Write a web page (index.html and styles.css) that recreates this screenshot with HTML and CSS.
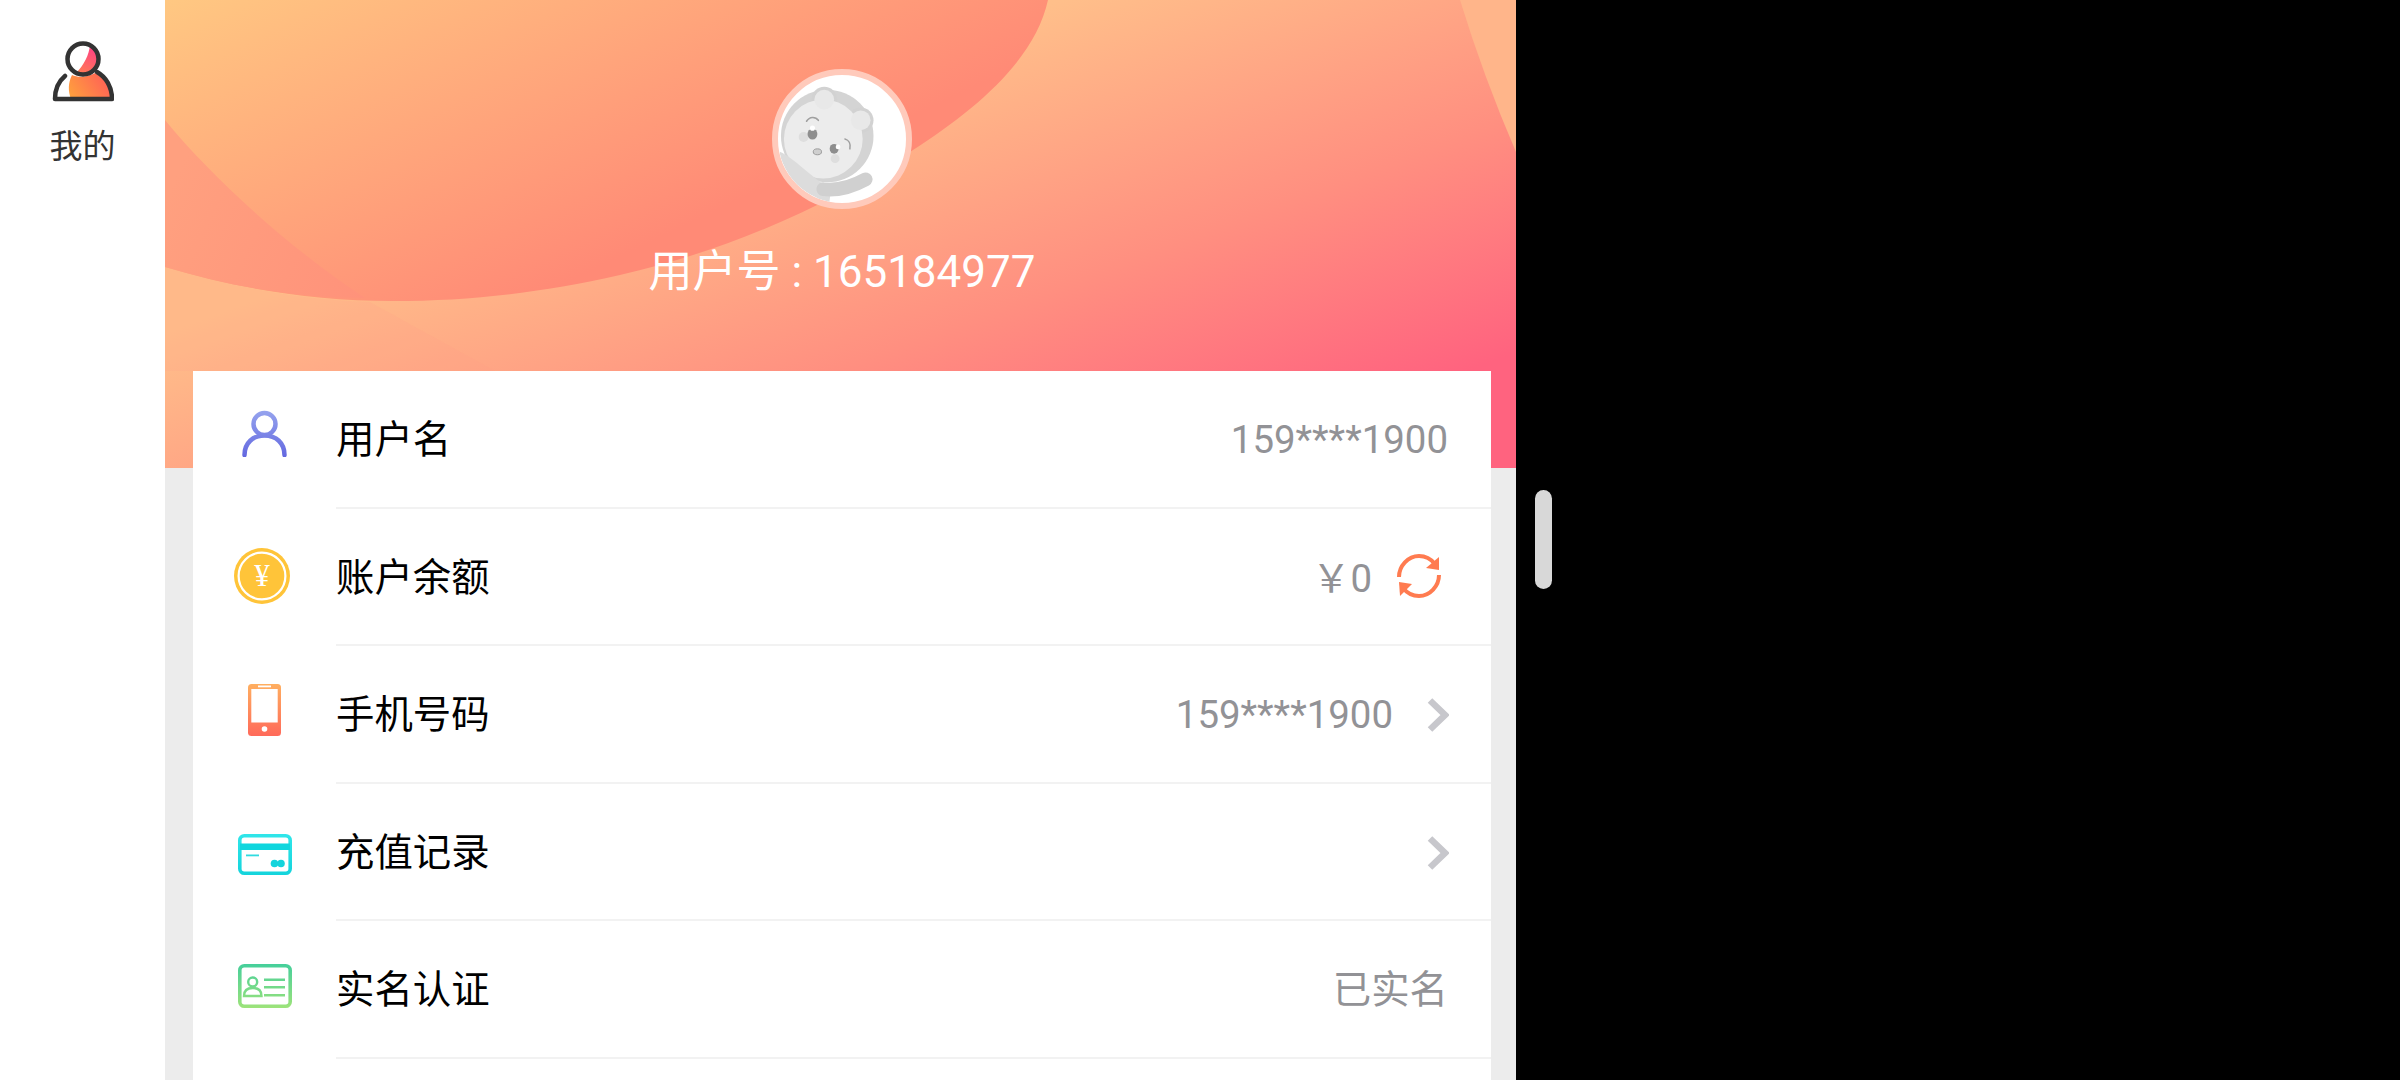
FILE: index.html

```html
<!DOCTYPE html>
<html lang="zh-CN">
<head>
    <meta charset="UTF-8">
    <title>我的</title>
    <link rel="stylesheet" href="styles.css">
</head>
<body>

<div class="screen">

    <div class="sidebar">
        <svg class="tab-icon" width="62" height="62" viewBox="0 0 62 62">
            <defs>
                <linearGradient id="tabBody" x1="0" y1="1" x2="1" y2="0.6">
                    <stop offset="0" stop-color="#ffa43c"/>
                    <stop offset="1" stop-color="#ff6455"/>
                </linearGradient>
                <linearGradient id="tabHead" x1="0.7" y1="0" x2="0.3" y2="1">
                    <stop offset="0" stop-color="#ff3f86"/>
                    <stop offset="1" stop-color="#ff7a55"/>
                </linearGradient>
            </defs>
            <path d="M19 58 C16 50 16 42 20 34 C26 37 37 36 43 32 C53 37 59 47 59 58 Z" fill="url(#tabBody)"/>
            <path d="M38 4 C37 14 32 24 24 32 A15 15 0 0 0 38 4 Z" fill="url(#tabHead)"/>
            <circle cx="31" cy="18" r="15.5" fill="none" stroke="#333" stroke-width="4.5"/>
            <path d="M13 35 C7 40 3 48 3 58 H60 C60 46 54 36 45 31" fill="none" stroke="#333" stroke-width="4.5" stroke-linecap="round" stroke-linejoin="round"/>
        </svg>
        <div class="tab-label">我的</div>
    </div>

    <div class="main">
        <div class="hero">
            <svg class="hero-bg" width="1351" height="468" viewBox="165 0 1351 468">
                <defs>
                    <linearGradient id="heroBase" gradientUnits="userSpaceOnUse" x1="1060" y1="0" x2="1231" y2="459">
                        <stop offset="0" stop-color="#ffbf8a"/>
                        <stop offset="0.55" stop-color="#ff8f80"/>
                        <stop offset="1" stop-color="#ff637f"/>
                    </linearGradient>
                    <linearGradient id="heroArc" gradientUnits="userSpaceOnUse" x1="165" y1="0" x2="350" y2="386">
                        <stop offset="0" stop-color="#ffc882"/>
                        <stop offset="1" stop-color="#ff8a76"/>
                    </linearGradient>
                    <linearGradient id="heroWedge" gradientUnits="userSpaceOnUse" x1="165" y1="200" x2="380" y2="300">
                        <stop offset="0" stop-color="#ffa07f"/>
                        <stop offset="1" stop-color="#ff917a"/>
                    </linearGradient>
                </defs>
                <rect x="165" y="0" width="1351" height="468" fill="url(#heroBase)"/>
                <path d="M1460 0 Q1484 78 1516 152 V0 Z" fill="#ffb58a"/>
                <path d="M165 371 V267 C235 288 310 301 370 302 L495 371 Z" fill="#ff9d8a" opacity="0.16"/>
                <path d="M165 0 H1048 C1035 60 975 110 913 150 C830 205 730 250 620 275 C540 293 470 301 393 301 C310 301 235 288 165 267 Z" fill="url(#heroArc)"/>
                <path d="M165 120 C210 175 285 245 365 298 C300 298 235 288 165 267 Z" fill="url(#heroWedge)"/>
            </svg>

            <div class="avatar">
                <svg width="128" height="128" viewBox="6 6 130 130">
                    <defs>
                        <clipPath id="avatarClip"><circle cx="71" cy="71" r="65"/></clipPath>
                    </defs>
                    <g clip-path="url(#avatarClip)">
                        <circle cx="56" cy="68" r="47" fill="#d4d4d4"/>
                        <circle cx="53" cy="31" r="13" fill="#d2d2d2"/>
                        <circle cx="90" cy="52" r="13" fill="#d2d2d2"/>
                        <circle cx="52" cy="71" r="40" fill="#ececec"/>
                        <circle cx="53" cy="31" r="10" fill="#e8e8e8"/>
                        <circle cx="90" cy="52" r="10" fill="#e8e8e8"/>
                        <path d="M8 84 C22 90 42 112 60 122 L58 136 L6 136 Z" fill="#dcdcdc"/>
                        <path d="M52 122 C68 124 84 118 95 112" fill="none" stroke="#d0d0d0" stroke-width="14" stroke-linecap="round"/>
                        <path d="M35 53 C38 48 44 48 47 52" fill="none" stroke="#a0a0a0" stroke-width="1.6" stroke-linecap="round"/>
                        <path d="M74 71 C78 72 80 76 79 81" fill="none" stroke="#a0a0a0" stroke-width="1.6" stroke-linecap="round"/>
                        <circle cx="32" cy="69" r="5" fill="#dedede"/>
                        <circle cx="64" cy="91" r="4.5" fill="#dedede"/>
                        <ellipse cx="41" cy="66" rx="5" ry="5.5" fill="#8e8e8e"/>
                        <circle cx="41" cy="60" r="2.6" fill="#fff"/>
                        <ellipse cx="63" cy="81" rx="4.5" ry="5" fill="#8e8e8e"/>
                        <circle cx="67" cy="79" r="2.4" fill="#fff"/>
                        <ellipse cx="46" cy="84" rx="4.2" ry="3" fill="#cfcfcf" stroke="#9a9a9a" stroke-width="1"/>
                    </g>
                </svg>
            </div>
            <div class="user-no">用户号 : 165184977</div>
        </div>

        <div class="card">

            <div class="row">
                <div class="row-icon">
                    <svg class="nudge-user" width="45" height="47" viewBox="0 0 45 47">
                        <defs>
                            <linearGradient id="userGrad" gradientUnits="userSpaceOnUse" x1="0" y1="0" x2="0" y2="47">
                                <stop offset="0" stop-color="#96a4ee"/>
                                <stop offset="1" stop-color="#6368e0"/>
                            </linearGradient>
                        </defs>
                        <circle cx="22.5" cy="14" r="11" fill="none" stroke="url(#userGrad)" stroke-width="4.5"/>
                        <path d="M2.5 45 C2.5 33 11 25.5 22.5 25.5 C34 25.5 42.5 33 42.5 45" fill="none" stroke="url(#userGrad)" stroke-width="4.5" stroke-linecap="round"/>
                    </svg>
                </div>
                <div class="row-body">
                    <span class="row-label">用户名</span>
                    <span class="row-value">159****1900</span>
                </div>
            </div>

            <div class="row">
                <div class="row-icon">
                    <svg class="nudge-coin" width="56" height="56" viewBox="0 0 56 56">
                        <circle cx="28" cy="28" r="28" fill="#ffc439"/>
                        <circle cx="28" cy="28" r="23.4" fill="none" stroke="#fff" stroke-width="2.2"/>
                        <text class="coin-text" x="28" y="38" text-anchor="middle">¥</text>
                    </svg>
                </div>
                <div class="row-body">
                    <span class="row-label">账户余额</span>
                    <span class="row-value value-money">￥0</span>
                    <svg class="refresh" width="44" height="44" viewBox="0 0 44 44">
                        <path d="M2 23 C2 12 11 2 22 2 C29 2 34 5 38 10" fill="none" stroke="#ff7b50" stroke-width="4"/>
                        <path d="M29 14 L42 16 L42 3 Z" fill="#ff7b50"/>
                        <path d="M42 21 C42 32 33 42 22 42 C15 42 10 39 6 34" fill="none" stroke="#ff7b50" stroke-width="4"/>
                        <path d="M15 30 L2 28 L3 42 Z" fill="#ff7b50"/>
                    </svg>
                </div>
            </div>

            <div class="row">
                <div class="row-icon">
                    <svg class="nudge-phone" width="33" height="52" viewBox="0 0 33 52">
                        <defs>
                            <linearGradient id="phoneGrad" x1="0" y1="0" x2="0" y2="1">
                                <stop offset="0" stop-color="#ffaf60"/>
                                <stop offset="1" stop-color="#ff6a5a"/>
                            </linearGradient>
                        </defs>
                        <rect width="33" height="52" rx="3.5" fill="url(#phoneGrad)"/>
                        <rect x="3.3" y="5" width="26.4" height="33.5" fill="#fff"/>
                        <rect x="10" y="1.5" width="13" height="1.8" fill="#fff"/>
                        <circle cx="16.5" cy="45" r="2.8" fill="#fff"/>
                    </svg>
                </div>
                <div class="row-body">
                    <span class="row-label">手机号码</span>
                    <span class="row-value">159****1900</span>
                    <svg class="chevron" width="22" height="34" viewBox="0 0 22 34">
                        <path d="M3 2.5 L18 17 L3 31.5" fill="none" stroke="#c7c7cc" stroke-width="6.5"/>
                    </svg>
                </div>
            </div>

            <div class="row">
                <div class="row-icon">
                    <svg class="nudge-card" width="54" height="41" viewBox="0 0 54 41">
                        <defs>
                            <linearGradient id="cardGrad" gradientUnits="userSpaceOnUse" x1="0" y1="0" x2="0" y2="41">
                                <stop offset="0" stop-color="#30e6ea"/>
                                <stop offset="1" stop-color="#14d4dc"/>
                            </linearGradient>
                        </defs>
                        <rect x="1.8" y="1.8" width="50.4" height="37.4" rx="4.5" fill="none" stroke="url(#cardGrad)" stroke-width="3.6"/>
                        <rect x="2" y="9.5" width="50" height="6.5" fill="#0fd6de"/>
                        <rect x="8" y="20.5" width="13" height="1.8" fill="#30dbe0"/>
                        <circle cx="36.5" cy="29.5" r="3.8" fill="#14d4dc"/>
                        <circle cx="43" cy="29.5" r="3.8" fill="#14d4dc"/>
                    </svg>
                </div>
                <div class="row-body">
                    <span class="row-label">充值记录</span>
                    <svg class="chevron chevron-only" width="22" height="34" viewBox="0 0 22 34">
                        <path d="M3 2.5 L18 17 L3 31.5" fill="none" stroke="#c7c7cc" stroke-width="6.5"/>
                    </svg>
                </div>
            </div>

            <div class="row">
                <div class="row-icon">
                    <svg class="nudge-id" width="54" height="44" viewBox="0 0 54 44">
                        <defs>
                            <linearGradient id="idGrad" gradientUnits="userSpaceOnUse" x1="0" y1="0" x2="0" y2="44">
                                <stop offset="0" stop-color="#45cf9b"/>
                                <stop offset="1" stop-color="#9de37a"/>
                            </linearGradient>
                        </defs>
                        <rect x="1.8" y="1.8" width="50.4" height="40.4" rx="4.5" fill="none" stroke="url(#idGrad)" stroke-width="3.6"/>
                        <circle cx="14.7" cy="18" r="4.5" fill="none" stroke="url(#idGrad)" stroke-width="2.4"/>
                        <path d="M6 32 C6 26 10 24 14.7 24 C19.5 24 23.5 26 23.5 32 Z" fill="none" stroke="url(#idGrad)" stroke-width="2.4"/>
                        <path d="M26 15.7 H47 M26 23.3 H47 M26 31.3 H47" fill="none" stroke="url(#idGrad)" stroke-width="2.4"/>
                    </svg>
                </div>
                <div class="row-body">
                    <span class="row-label">实名认证</span>
                    <span class="row-value value-cn">已实名</span>
                </div>
            </div>

            <div class="row">
                <div class="row-icon"></div>
                <div class="row-body"></div>
            </div>

        </div> <!-- end card -->
    </div> <!-- end main -->

    <div class="side-black">
        <div class="scroll-pill"></div>
    </div>

</div> <!-- end screen -->

</body>
</html>
```

FILE: styles.css

```css
html,
body {
    margin: 0;
    height: 100%;
    overflow: hidden;
}

body {
    background-color: #000;
    font-family: Roboto, "Noto Sans CJK SC", sans-serif;
}

.screen {
    display: flex;
    width: 2400px;
    height: 1080px;
    overflow: hidden;
}

/* left tab */

.sidebar {
    width: 165px;
    flex-shrink: 0;
    display: flex;
    flex-direction: column;
    align-items: center;
    padding-top: 41px;
    box-sizing: border-box;
    background-color: #fff;
}

.tab-label {
    margin-top: 22px;
    font-size: 33px;
    line-height: 44px;
    color: #333;
}

/* main column */

.main {
    width: 1351px;
    flex-shrink: 0;
    background-color: #ececec;
    overflow: hidden;
}

.hero {
    position: relative;
    height: 468px;
    display: flex;
    flex-direction: column;
    align-items: center;
    padding: 69px 0 0 3px;
    box-sizing: border-box;
}

.hero-bg {
    position: absolute;
    top: 0;
    left: 0;
}

.avatar {
    position: relative;
    width: 128px;
    height: 128px;
    border: 6px solid #ffcabb;
    border-radius: 50%;
    background-color: #fff;
    overflow: hidden;
}

.avatar svg {
    display: block;
}

.user-no {
    position: relative;
    margin-top: 33px;
    font-size: 44px;
    line-height: 60px;
    color: #fff;
    white-space: nowrap;
}

/* list card */

.card {
    position: relative;
    margin: -97px 25px 0 28px;
    background-color: #fff;
}

.row {
    display: flex;
    height: 137.5px;
}

.row-icon {
    width: 143px;
    flex-shrink: 0;
    display: flex;
    align-items: center;
    justify-content: center;
}

.row-body {
    flex: 1;
    display: flex;
    align-items: center;
    padding-right: 43px;
    border-bottom: 2px solid #f2f2f2;
}

.row-label {
    flex: 1;
    margin-bottom: 5px;
    font-size: 38.4px;
    color: #000;
}

.row-value {
    margin-top: 2px;
    font-size: 38.4px;
    color: #929296;
}

.value-money {
    margin-top: 0;
    margin-bottom: 2px;
}

.value-cn {
    margin-top: 0;
    margin-bottom: 5px;
}

.refresh {
    margin-left: 25px;
    margin-right: 7px;
}

.chevron {
    margin-top: 3px;
    margin-left: 34px;
    margin-right: -1px;
}

.chevron-only {
    margin-left: 0;
}

.coin-text {
    font-family: "Liberation Serif", serif;
    font-size: 31px;
    fill: #fff;
}

/* icons do not sit quite on the row centre */
.nudge-user {
    margin-bottom: 13px;
}

.nudge-coin {
    margin-bottom: 2px;
    margin-right: 5px;
}

.nudge-phone {
    margin-bottom: 10px;
}

.nudge-card {
    margin-top: 5px;
}

.nudge-id {
    margin-bottom: 8px;
}

/* black strip on the right */

.side-black {
    flex: 1;
    padding: 490px 0 0 19px;
    background-color: #000;
}

.scroll-pill {
    width: 17px;
    height: 99px;
    border-radius: 9px;
    background-color: #d8d8d8;
}
```
